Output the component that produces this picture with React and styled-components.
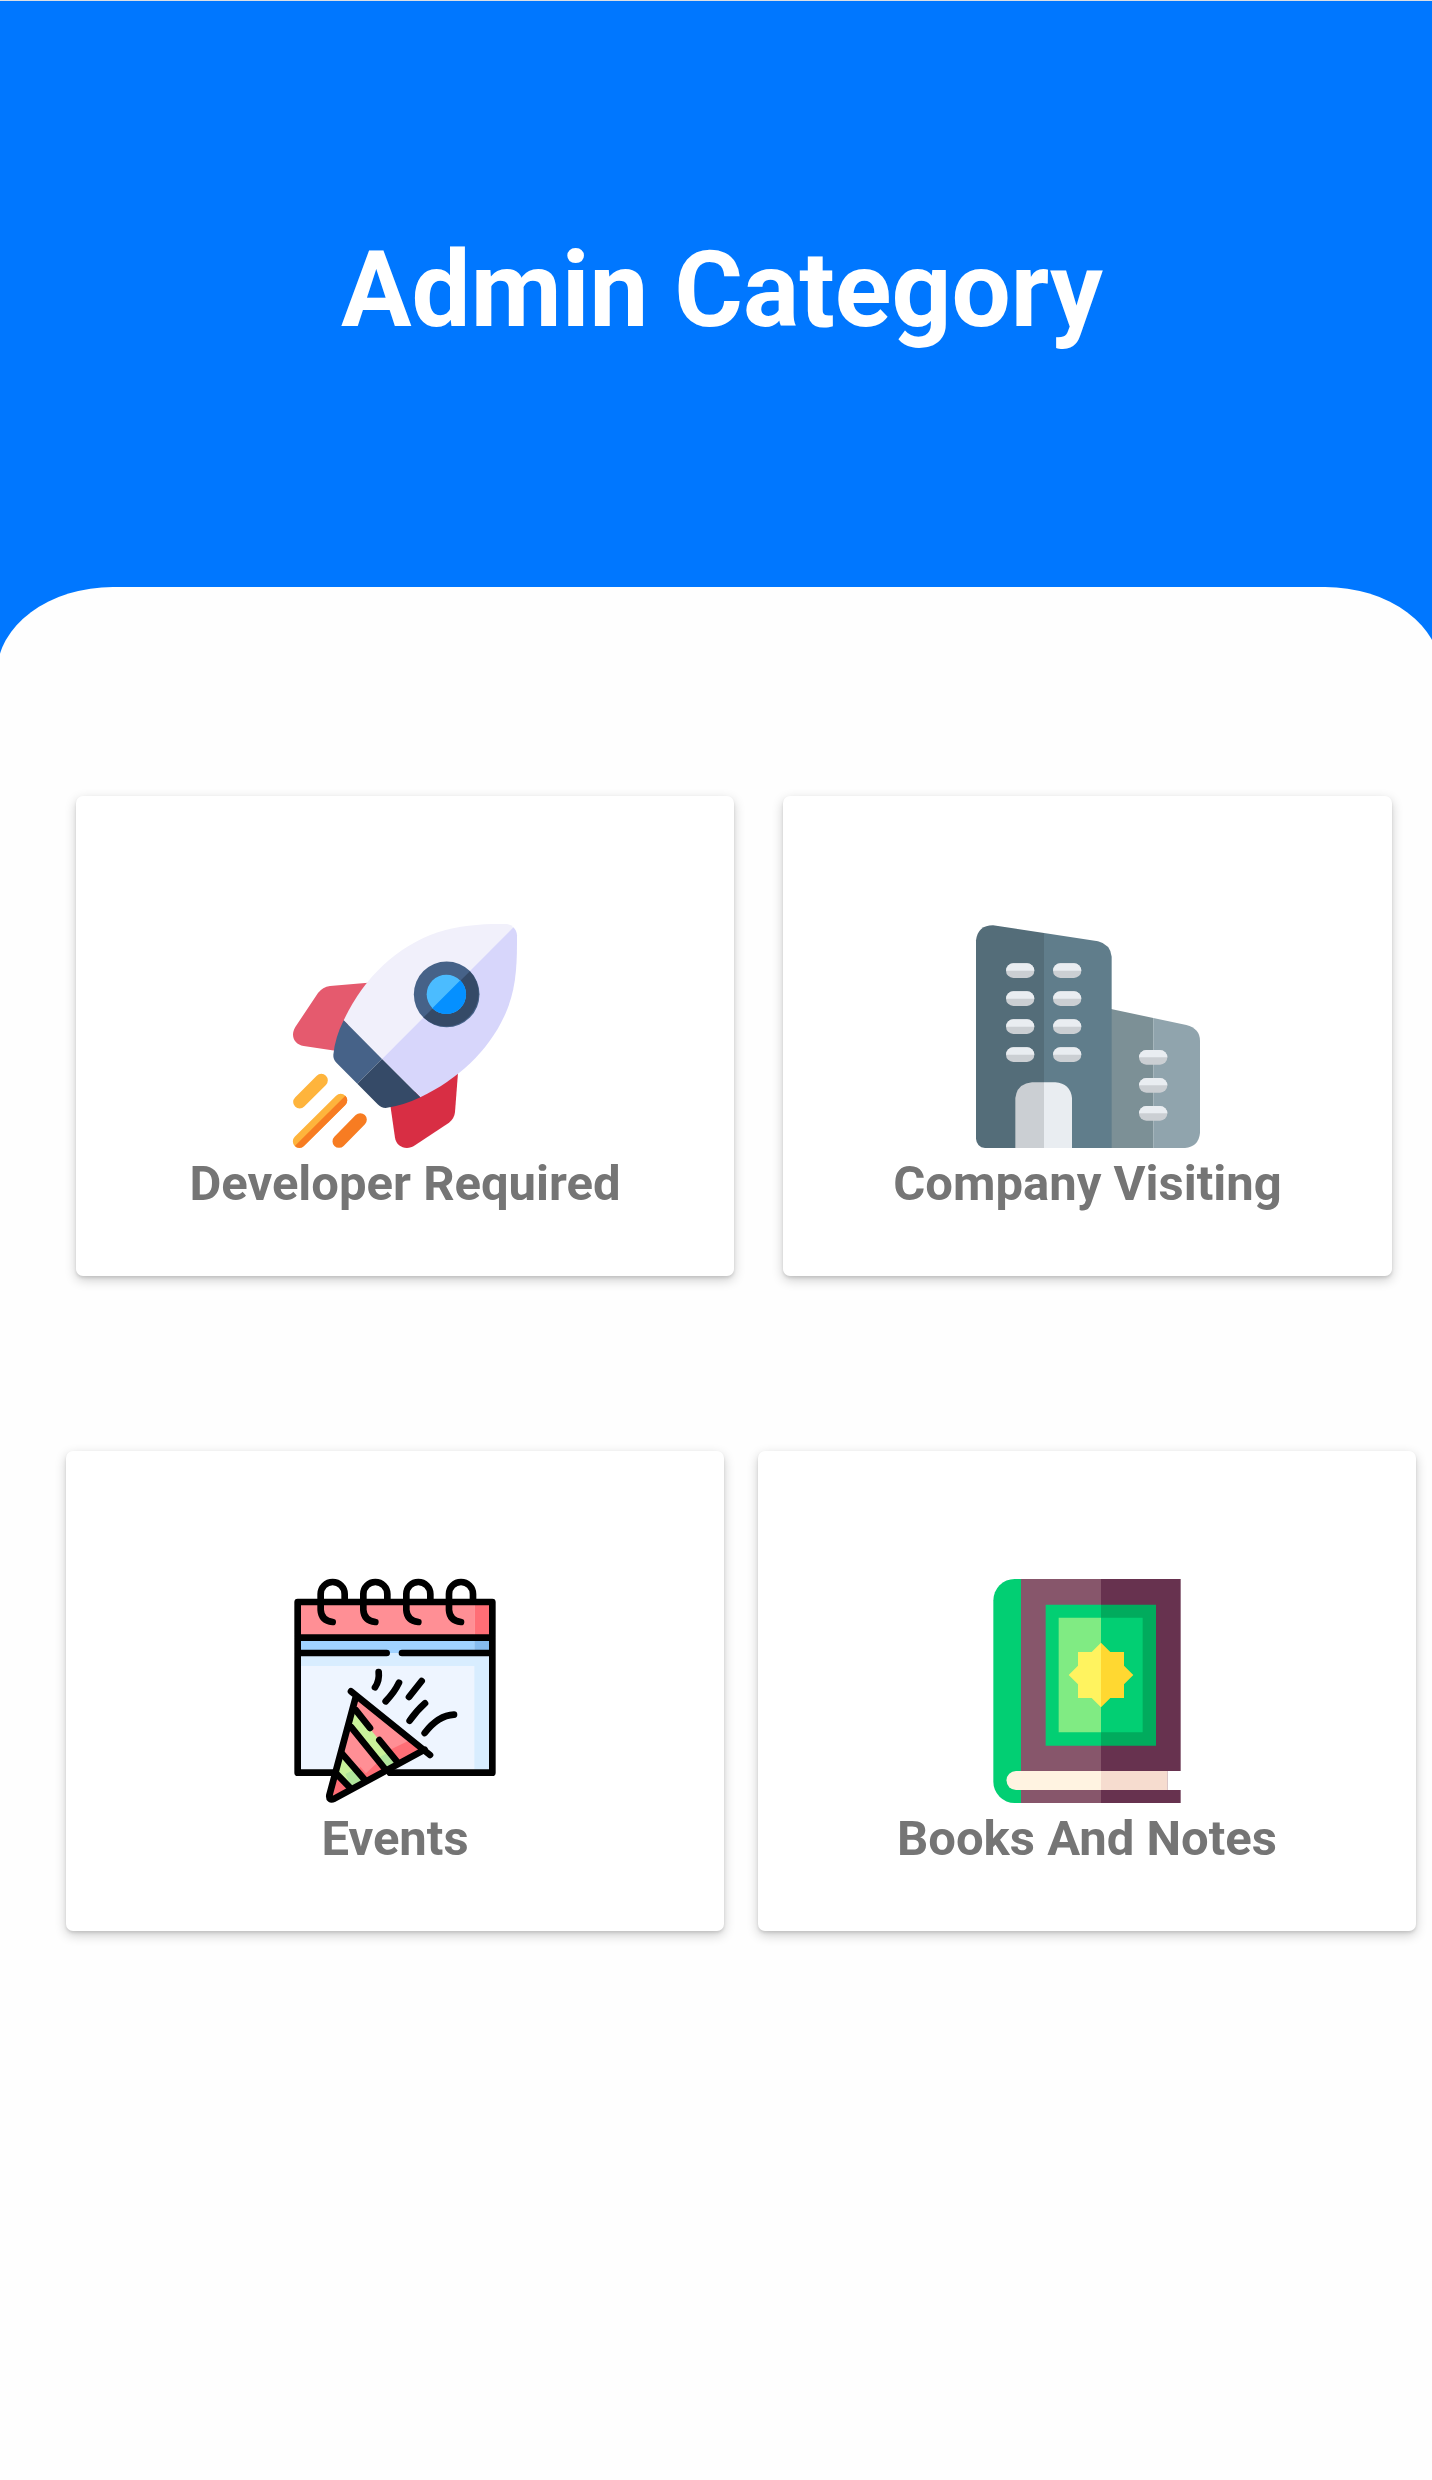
import React from "react";
import styled, { createGlobalStyle } from "styled-components";

const GlobalStyle = createGlobalStyle`
  * { box-sizing: border-box; }
  body {
    margin: 0;
    background: #fefefe;
    font-family: Roboto, "Liberation Sans", sans-serif;
  }
`;

const Page = styled.div`
  min-height: 100vh;
  overflow-x: clip;
`;

const Header = styled.header`
  display: flex;
  justify-content: center;
  padding: 228px 0 347px 12px;
  background: #0077ff;
  border-top: 1px solid #dcdfe4;
`;

const Title = styled.h1`
  margin: 0;
  color: #fff;
  font-size: 105px;
  line-height: 124px;
  font-weight: 700;
`;

const Sheet = styled.main`
  display: flex;
  flex-direction: column;
  gap: 175px;
  margin: -113px -9px 0 -3px;
  padding: 209px 0 120px;
  background: #fefefe;
  border-radius: 116px 116px 0 0 / 86px 86px 0 0;
`;

const Row = styled.div`
  display: flex;
  gap: ${(p) => p.$gap}px;
  padding: 0 ${(p) => p.$right}px 0 ${(p) => p.$left}px;
`;

const Card = styled.button`
  display: flex;
  flex: ${(p) => p.$grow || 1} 1 0;
  flex-direction: column;
  align-items: center;
  min-width: 0;
  padding: 128px 0 56px;
  border: 0;
  border-radius: 7px;
  background: #fff;
  box-shadow: 0 4px 12px rgba(0, 0, 0, 0.2), 0 2px 3px rgba(0, 0, 0, 0.1);
  font-family: inherit;
  cursor: pointer;
`;

const Icon = styled.svg`
  display: block;
  flex: none;
  width: 224px;
  height: 224px;
  overflow: visible;
`;

const Label = styled.span`
  color: #757575;
  font-size: 49px;
  line-height: 72px;
  font-weight: 700;
  white-space: nowrap;
`;

function RocketIcon() {
  return (
    <Icon viewBox="39 42 672 672" aria-hidden="true">
      <path fill="#e55a6e" d="M264 218 150 228Q128 231 114 249L46 351C30 378 43 402 71 408L166 422 210 330Z" />
      <path fill="#d82e44" d="M534 488 525 606Q523 626 507 638L405 706C379 723 349 710 345 683L331 586 430 530Z" />
      <path fill="#f1f0fb" d="M191 331C250 207 346 110 474 67C540 45 610 41 678 42Q691 43 700 52L306 447Z" />
      <path fill="#d7d6fb" d="M700 52Q710 61 711 76C711 150 711 222 683 295C637 412 541 504 421 562L306 447Z" />
      <path fill="#466288" d="M191 331 306 447 232 521 170 459Q159 448 160 434Q165 383 191 331Z" />
      <path fill="#354a67" d="M306 447 421 562Q370 587 317 594Q303 594 293 583L232 521Z" />
      <circle cx="500" cy="253" r="98.500" fill="#466288" />
      <path fill="#354a67" d="M569.600 183.400A98.500 98.500 0 0 1 430.400 322.600Z" />
      <circle cx="499" cy="253" r="59" fill="#4bbcff" />
      <path fill="#0590ff" d="M541 211A59 59 0 0 1 457 295Z" />
      <g fill="none" strokeWidth="39" strokeLinecap="round">
        <path stroke="#feb43c" d="M124 511 59 576" />
        <path stroke="#feb43c" d="M182 571 58 694" />
        <path stroke="#f77c22" d="M241 629 177 694" />
      </g>
      <path fill="#f77c22" d="M196 557A19.500 19.500 0 0 1 196 585L72 708A19.500 19.500 0 0 1 44.500 708Z" />
    </Icon>
  );
}

const towerWindows = [160, 244, 328, 412].flatMap((y) => [[138, y], [279, y]]);
const annexWindows = [420, 504, 588].map((y) => [537, y]);

function BuildingIcon() {
  return (
    <Icon viewBox="48 42 672 672" aria-hidden="true">
      <path fill="#7c9096" d="M453 297 580 324V714H453Z" />
      <path fill="#90a4ad" d="M580 324 679 345Q720 356 720 392V669Q716 710 675 714H580Z" />
      <path fill="#546d79" d="M252 69 99 46Q54 46 48 91V686Q50 711 75 714H252Z" />
      <path fill="#607d8b" d="M252 69 414 94Q451 103 455 140V714H252Z" />
      <path fill="#cbcfd3" d="M252 517H216Q171 521 166 564V714H252Z" />
      <path fill="#e9edf1" d="M252 517H286Q331 521 336 564V714H252Z" />
      {[...towerWindows, ...annexWindows].map(([x, y]) => (
        <g key={`${x}-${y}`}>
          <rect x={x} y={y} width="85" height="44" rx="22" fill="#cbcfd3" />
          <path fill="#e9edf1" d={`M${x} ${y + 22}A22 22 0 0 1 ${x + 22} ${y}H${x + 63}A22 22 0 0 1 ${x + 85} ${y + 22}Z`} />
        </g>
      ))}
    </Icon>
  );
}

function EventsIcon() {
  return (
    <Icon viewBox="9 42 672 672" aria-hidden="true">
      <path fill="#eef5ff" d="M53 218H637V623H53Z" />
      <path fill="#d8edff" d="M53 264H637V623H583V303H53Z" />
      <path fill="#a0d2ff" d="M53 218H583V264H53Z" />
      <path fill="#86bcef" d="M583 218H637V264H583Z" />
      <path fill="#ff8f95" d="M53 111H583V218H53Z" />
      <path fill="#ff6e76" d="M583 111H637V218H583Z" />
      <g fill="none" stroke="#000" strokeWidth="20" strokeLinecap="round" strokeLinejoin="round">
        <path d="M163 623H53V111H637V623H330M53 218H637M53 264H320M366 264H637" />
        {[0, 128, 257, 385].map((x) => (
          <path key={x} d={`M${194 + x} 108V87A36 36 0 0 0 ${122 + x} 87V135Q${124 + x} 167 ${158 + x} 171`} />
        ))}
      </g>
      <path fill="#ff8f95" d="M227 397 434 554 157 708Q144 703 148 691Z" />
      <path fill="#ff6e76" d="M434 554 157 708 148 691 168 633 211 665 241 605 258 625 335 552 386 527Z" />
      <path fill="#caf39b" d="M222 433 352 592 318 612 211 485ZM187 570 254 645 215 666 166 628Z" />
      <path fill="#b0e59b" d="M293 580 329 560 354 592 317 614ZM196 627 226 612 254 645 215 668Z" />
      <g fill="none" stroke="#000" strokeWidth="20" strokeLinecap="round" strokeLinejoin="round">
        <path d="M213 379 450 570M227 397 148 691Q146 708 163 701L434 554" />
        <path d="M228 436 270 489M298 525 352 591M214 487 315 612M188 568 252 642M171 628 208 666" />
        <path d="M296 321Q299 347 285 367M357 353Q344 381 317 409M425 348 387 396M435 415Q411 436 389 467M434 504Q475 451 522 449" />
      </g>
    </Icon>
  );
}

function BookIcon() {
  return (
    <Icon viewBox="15 42 672 672" aria-hidden="true">
      <path fill="#02cf73" d="M153 42H134A64 64 0 0 0 70 106V650A64 64 0 0 0 134 714H153Z" />
      <path fill="#87566b" d="M153 42H393V714H153Z" />
      <path fill="#67324f" d="M393 42H632V618H592V675H632V714H393Z" />
      <path fill="#fff3e1" d="M393 618H138A28.500 28.500 0 0 0 138 675H393Z" />
      <path fill="#f6dccf" d="M393 618H592V675H393Z" />
      <path fill="#02cf73" d="M227 119H393V542H227Z" />
      <path fill="#01ab5d" d="M393 119H558V542H393Z" />
      <path fill="#80eb83" d="M266 158H393V502H266Z" />
      <path fill="#02cf73" d="M393 158H518V502H393Z" />
      <path fill="#fff35f" d="M393 233 365 261H324V302L296 330 324 358V399H365L393 427Z" />
      <path fill="#ffd831" d="M393 233 421 261H462V302L490 330 462 358V399H421L393 427Z" />
    </Icon>
  );
}

function Category({ icon: Picture, label, grow }) {
  return (
    <Card type="button" $grow={grow}>
      <Picture />
      <Label>{label}</Label>
    </Card>
  );
}

export default function App() {
  return (
    <Page>
      <GlobalStyle />
      <Header>
        <Title>Admin Category</Title>
      </Header>
      <Sheet>
        <Row $gap={49} $left={79} $right={49}>
          <Category icon={RocketIcon} label="Developer Required" grow={658} />
          <Category icon={BuildingIcon} label="Company Visiting" grow={609} />
        </Row>
        <Row $gap={34} $left={69} $right={25}>
          <Category icon={EventsIcon} label="Events" />
          <Category icon={BookIcon} label="Books And Notes" />
        </Row>
      </Sheet>
    </Page>
  );
}
